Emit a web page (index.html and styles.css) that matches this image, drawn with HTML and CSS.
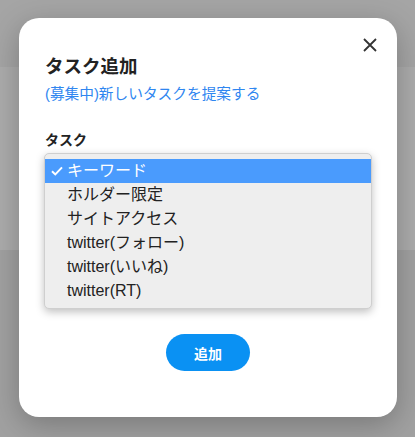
FILE: index.html
```html
<!DOCTYPE html>
<html>
<head>
<meta charset="UTF-8">
<link rel="stylesheet" href="styles.css">
</head>
<body>
    <div class="page">
        <div class="page-head"></div>
        <div class="page-band"></div>
    </div>

    <div class="modal">
        <button class="close" aria-label="閉じる">
            <svg width="14" height="14" viewBox="0 0 14 14">
                <path d="M1 1L13 13M13 1L1 13" stroke="#333" stroke-width="1.8" fill="none"/>
            </svg>
        </button>

        <h2 class="title">タスク追加</h2>
        <a class="suggest" href="#">(募集中)新しいタスクを提案する</a>

        <div class="field">
            <label class="label">タスク</label>
            <ul class="options">
                <li class="option selected">
                    <svg class="check" width="12" height="10" viewBox="0 0 12 10">
                        <path d="M1 5.2L4.3 8.4L11 1.4" stroke="#fff" stroke-width="2" fill="none"/>
                    </svg>
                    キーワード
                </li>
                <li class="option">ホルダー限定</li>
                <li class="option">サイトアクセス</li>
                <li class="option">twitter(フォロー)</li>
                <li class="option">twitter(いいね)</li>
                <li class="option">twitter(RT)</li>
            </ul>
        </div>

        <div class="actions">
            <button class="add">追加</button>
        </div>
    </div>
</body>
</html>
```

FILE: styles.css
```css
body
{
    margin: 0;
    padding: 0;
    background-color: #a1a1a1;
    font-family: "Liberation Sans", "Noto Sans CJK JP", sans-serif;
    color: #222;
}

.page-head
{
    height: 67px;
    background-color: #a5a5a5;
}

.page-band
{
    height: 183px;
    background-color: #acacac;
}

/* modal sits over the page */
.modal
{
    position: absolute;
    left: 19px;
    top: 18px;
    width: 378px;
    height: 399px;
    box-sizing: border-box;
    padding: 36px 26px 0 26px;
    background-color: #fff;
    border-radius: 20px;
    box-shadow: 0 8px 30px rgba(0, 0, 0, 0.25);
}

.close
{
    position: absolute;
    right: 20px;
    top: 20px;
    width: 14px;
    height: 14px;
    padding: 0;
    border: none;
    background: none;
    display: flex;
}

.title
{
    margin: 0;
    font-size: 18.5px;
    line-height: 26px;
    font-weight: bold;
    color: #222;
}

.suggest
{
    display: block;
    margin-top: 3px;
    font-size: 14.7px;
    line-height: 22px;
    color: #2f86f0;
    text-decoration: none;
}

.field
{
    margin-top: 25px;
}

.label
{
    display: block;
    font-size: 14px;
    line-height: 20px;
    font-weight: bold;
}

.options
{
    list-style: none;
    margin: 3px 0 0 -1px;
    padding: 5px 0;
    width: 328px;
    box-sizing: border-box;
    background-color: #eeeeee;
    border: 1px solid #cfcfcf;
    border-radius: 5px;
    box-shadow: 0 3px 8px rgba(0, 0, 0, 0.25);
}

.option
{
    height: 24px;
    line-height: 24px;
    padding-left: 22px;
    font-size: 16px;
    color: #222;
    position: relative;
}

.option.selected
{
    background-color: #4a9bfd;
    color: #fff;
}

.check
{
    position: absolute;
    left: 6px;
    top: 7px;
}

.actions
{
    display: flex;
    justify-content: center;
    margin-top: 25px;
}

.add
{
    width: 84px;
    height: 37px;
    border: none;
    border-radius: 19px;
    background-color: #0a91f3;
    color: #fff;
    font-family: inherit;
    font-size: 14px;
    font-weight: bold;
}
```
